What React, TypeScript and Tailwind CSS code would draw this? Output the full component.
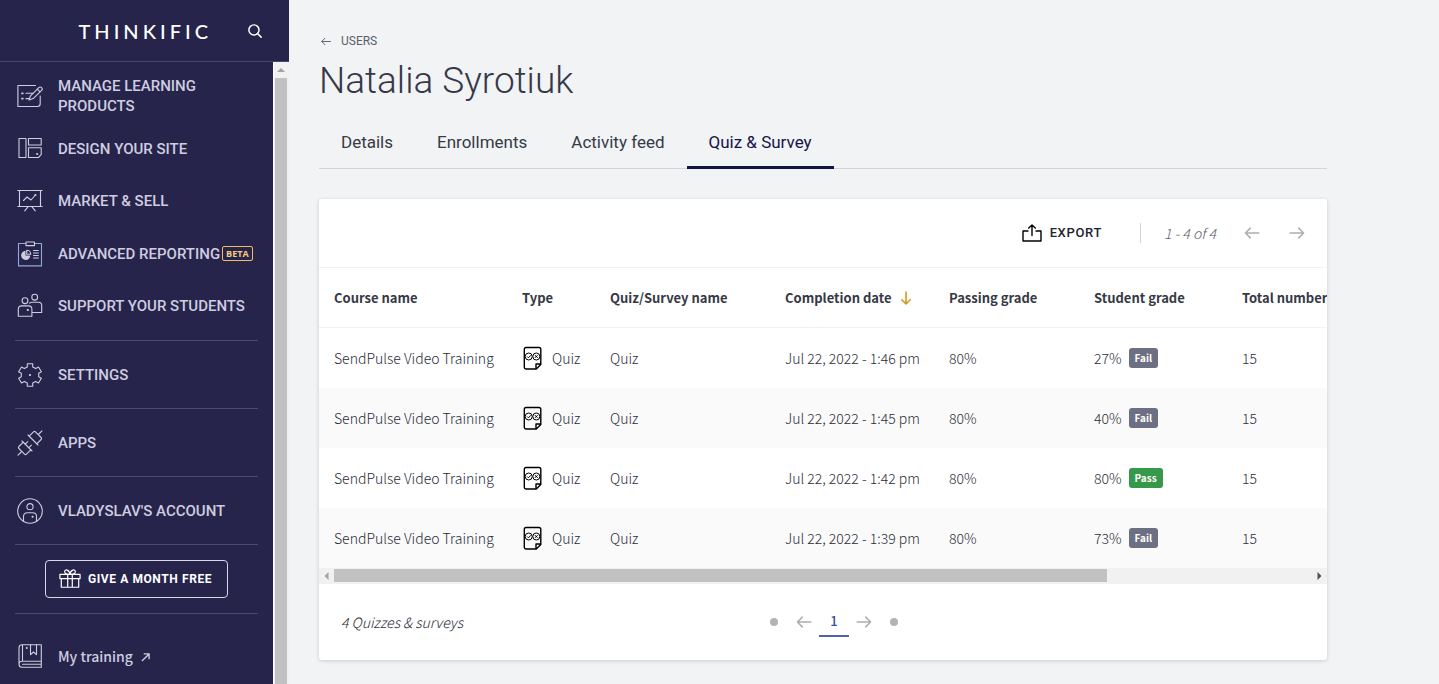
import type { ReactNode } from "react";

const HEAD = "font-[Roboto,'Open_Sans',sans-serif]";
const BODY = "font-['Noto_Sans_CJK_SC','Noto_Sans',sans-serif]";

function Icon({ children }: { children: ReactNode }) {
  return (
    <svg
      viewBox="0 0 26 26"
      className="size-[26px] shrink-0"
      fill="none"
      stroke="currentColor"
      strokeWidth="1.1"
      strokeLinecap="round"
      strokeLinejoin="round"
      aria-hidden="true"
    >
      {children}
    </svg>
  );
}

const icons = {
  manage: (
    <Icon>
      <path d="M18.5 2.5H.9v21h19.6c1.500 0 2.700-1.200 2.700-2.700V13" />
      <path d="M9 10.300h7M9 15.600h3" />
      <path d="M5 10.300h.8M5 15.600h.8" strokeWidth="1.800" />
      <path d="m12 17 1.500-4.200 8.300-8.200a1.900 1.900 0 0 1 2.800 2.800l-8.400 8.200zM20.300 6.200l2.700 2.700" />
    </Icon>
  ),
  design: (
    <Icon>
      <path d="M2 2.500h7v19H2zM11.500 2.500h12.700V9H11.500zM11.500 11.700h12.700v7l-2.800 2.800h-9.900z" />
      <path d="M20 18h.3" strokeWidth="1.800" />
    </Icon>
  ),
  market: (
    <Icon>
      <path d="M.8 2.500h24.400M.8 18.500h24.400M2.500 2.500v16M23.500 2.500v16M11 18.800l-3.300 4M15 18.800l3.300 4" />
      <path d="m6.500 12.500 3.500-3.500 4 3 4-4.500" />
      <path d="M18.300 7h.2" strokeWidth="2" />
    </Icon>
  ),
  report: (
    <Icon>
      <path d="M8.500 2.500h-7v22.400h23V2.500h-7.200" stroke="#8fa9d6" />
      <path d="M9 1h8.500v3.600H9z" />
      <path d="M8.500 9.700v4.800h4.800a4.600 4.600 0 1 1-4.800-4.800z" fill="currentColor" stroke="none" />
      <path d="M9.700 9.200c2.200 0 4 1.700 4 4h-4zM16.500 9.500h4.800M16.500 12h4.800M16.500 14.500h4.800M16.500 17h4.800" />
    </Icon>
  ),
  support: (
    <Icon>
      <circle cx="17.700" cy="4.200" r="2.900" />
      <circle cx="8" cy="7.700" r="2.900" />
      <path d="M1.300 23.200v-7c0-2 1.400-3.300 3.300-3.300h7c1.900 0 3.300 1.300 3.300 3.300v7zM12.500 10.200c.7-.6 1.500-.9 2.500-.9h6.500c1.900 0 3.200 1.300 3.200 3.200v7H15.500" />
      <path d="M10.700 17h.3" strokeWidth="2" />
    </Icon>
  ),
  settings: (
    <Icon>
      <path d="M10.300 1.800h5.400v3.100l3 1.700 2.800-1.600 2.900 4.700-2.700 1.600v3.400l2.700 1.600-2.900 4.700-2.800-1.600-3 1.700v3.100h-5.400v-3.100l-3-1.700-2.800 1.600-2.900-4.700 2.700-1.600v-3.400L1.600 9.700 4.500 5l2.800 1.600 3-1.700z" />
      <path d="M12.900 13h.2" strokeWidth="2" />
    </Icon>
  ),
  apps: (
    <Icon>
      <path d="M1 25.200l3.200-3.200M25 .8l-3.200 3.200" />
      <path d="M6.200 12.200 1.900 16.500c-.6.600-.6 1.400 0 2l5.600 5.600c.6.600 1.400.6 2 0l4.300-4.300M5 11l10 10M8.200 14.200l2.600-2.600M11.800 17.800l2.600-2.600" />
      <path d="m19.800 13.800 4.300-4.300c.6-.6.6-1.400 0-2l-5.600-5.600c-.6-.6-1.400-.6-2 0l-4.300 4.300M11 5l10 10" />
    </Icon>
  ),
  account: (
    <Icon>
      <circle cx="13" cy="13" r="12.300" />
      <circle cx="13" cy="8.700" r="3.100" />
      <path d="M6.500 23v-4.500c0-2.400 1.700-3.800 3.800-3.800h5.400c2.100 0 3.800 1.400 3.800 3.800V23" />
      <path d="M15.500 18.800h.2" strokeWidth="2" />
    </Icon>
  ),
  training: (
    <Icon>
      <path d="M24.300 18.300V1.700H5C3.300 1.700 2 3 2 4.700v16.500c0 1.700 1.300 3 3 3h19.300v-5.900H5c-1.700 0-3 1.300-3 3M5.500 1.700v16.600M5.500 21.300h18.800" />
      <path d="M13.500 1.700v10l3-2.700 3 2.700v-10" />
      <path d="M9.700 5h.2" strokeWidth="1.800" />
    </Icon>
  ),
};

function GiftIcon() {
  return (
    <svg viewBox="0 0 24 24" className="h-[22px] w-[22px]" fill="none" stroke="currentColor" strokeWidth="1.300" strokeLinejoin="round" aria-hidden="true">
      <path d="M1 7h22v4.500H1zM2.500 11.500h19V21h-19zM9.500 7v14M14.500 7v14M12 6.500C9.500 6.800 6.200 6.500 6.200 4c0-3 5-2.500 5.800 2.500C12.800 1.500 17.800 1 17.800 4c0 2.500-3.300 2.800-5.800 2.500z" />
    </svg>
  );
}

function Arrow({ className }: { className: string }) {
  return (
    <svg viewBox="0 0 18 14" className={className} fill="none" stroke="currentColor" strokeWidth="1.700" strokeLinecap="round" strokeLinejoin="round" aria-hidden="true">
      <path d="M17 7H1.500M7 1.300 1.300 7 7 12.700" />
    </svg>
  );
}

function QuizIcon() {
  return (
    <svg viewBox="0 0 20 24" className="h-6 w-5 text-black" fill="none" stroke="currentColor" strokeWidth="1.400" strokeLinejoin="round" aria-hidden="true">
      <path d="M4 1.500h13c1.100 0 1.800.8 1.800 1.800V18.500L14.300 23H4c-1 0-1.700-.7-1.700-1.700v-18c0-1 .7-1.800 1.700-1.800zM14 22.800V18h4.800" />
      <g strokeWidth="1">
        <circle cx="6.700" cy="10.500" r="3.500" />
        <circle cx="14.300" cy="10.500" r="3.500" />
        <path d="m5.100 10.500 1.300 1.300L8.800 9.300M13 9.200l2.600 2.600M15.600 9.200l-2.600 2.600" />
      </g>
    </svg>
  );
}

function NavItem({ icon, children, size }: { icon: ReactNode; children: ReactNode; size: string }) {
  return (
    <a href="#" className={`flex items-center gap-[15px] px-[17px] ${size}`}>
      {icon}
      {children}
    </a>
  );
}

function Divider() {
  return <div className="mx-[15px] border-t border-[#4c4a74]" />;
}

function Sidebar() {
  return (
    <aside className={`sticky top-0 flex h-screen w-[289px] shrink-0 flex-col overflow-hidden bg-[#26244b] text-[15px] leading-5 font-medium text-[#cfcde0] ${HEAD}`}>
      <div className="flex h-[62px] shrink-0 items-center justify-end border-b border-[#454670] pt-px pr-[27px]">
        <a href="#" className="mr-9 font-[Lato,sans-serif] text-[20px] leading-6 font-medium tracking-[4px] text-white">
          THINKIFIC
        </a>
        <button type="button" aria-label="Search" className="text-white">
          <svg viewBox="0 0 16 16" className="size-[14px]" fill="none" stroke="currentColor" strokeWidth="1.700" strokeLinecap="round">
            <circle cx="6.800" cy="6.800" r="5.800" />
            <path d="m11 11 4 4" />
          </svg>
        </button>
      </div>
      <div className="flex min-h-0 flex-1">
        <nav className="flex-1 overflow-hidden pt-[7px]">
          <NavItem icon={icons.manage} size="h-[53px]">
            <span className="w-40">MANAGE LEARNING PRODUCTS</span>
          </NavItem>
          <NavItem icon={icons.design} size="h-[53px]">DESIGN YOUR SITE</NavItem>
          <NavItem icon={icons.market} size="h-[52px]">MARKET &amp; SELL</NavItem>
          <NavItem icon={icons.report} size="h-[53px]">
            <span className="flex items-center gap-[2px] whitespace-nowrap">
              ADVANCED REPORTING
              <span className="rounded-[2px] border border-[#f0bd5e] px-[3px] font-['Open_Sans',sans-serif] text-[9px] leading-[13px] font-bold text-[#f7cc75]">BETA</span>
            </span>
          </NavItem>
          <NavItem icon={icons.support} size="h-[52px]">SUPPORT YOUR STUDENTS</NavItem>
          <div className="h-2" />
          <Divider />
          <NavItem icon={icons.settings} size="h-[67px]">SETTINGS</NavItem>
          <Divider />
          <NavItem icon={icons.apps} size="h-[67px]">APPS</NavItem>
          <Divider />
          <NavItem icon={icons.account} size="h-[67px]">VLADYSLAV'S ACCOUNT</NavItem>
          <Divider />
          <div className="flex h-[68px] items-center justify-center">
            <button type="button" className="flex h-[38px] w-[183px] items-center justify-center gap-[7px] rounded-[4px] border border-[#d9d8e6] pr-[2px] text-[12px] font-bold tracking-wider whitespace-nowrap text-white">
              <GiftIcon />
              GIVE A MONTH FREE
            </button>
          </div>
          <Divider />
          <NavItem icon={icons.training} size="h-[83px]">
            <span className={`flex items-center gap-2 text-[14px] ${BODY}`}>
              My training
              <svg viewBox="0 0 10 10" className="mt-1 size-[9px]" fill="none" stroke="currentColor" strokeWidth="1.500" aria-hidden="true">
                <path d="m1 9 8-8M3 1h6v6" />
              </svg>
            </span>
          </NavItem>
        </nav>
        <div className="flex w-4 flex-col border-l border-white bg-[#f1f1f1] pr-[2px] pl-px">
          <div className="flex h-4 shrink-0 items-center justify-center text-[#a3a3a3]">
            <svg viewBox="0 0 8 4" className="h-1 w-2" fill="currentColor" aria-hidden="true">
              <path d="M4 0l4 4H0z" />
            </svg>
          </div>
          <div className="flex-1 bg-[#c1c1c1]" />
        </div>
      </div>
    </aside>
  );
}

const tabs = ["Details", "Enrollments", "Activity feed", "Quiz & Survey"];

const rows = [
  { time: "1:46", grade: "27%", result: "Fail" },
  { time: "1:45", grade: "40%", result: "Fail" },
  { time: "1:42", grade: "80%", result: "Pass" },
  { time: "1:39", grade: "73%", result: "Fail" },
];

function QuizTable() {
  return (
    <div className="overflow-hidden">
      <table className="w-[1277px] table-fixed text-left text-[14px] leading-5 whitespace-nowrap text-[#2a2d38]">
        <colgroup>
          <col className="w-[188px]" />
          <col className="w-[88px]" />
          <col className="w-[175px]" />
          <col className="w-[164px]" />
          <col className="w-[145px]" />
          <col className="w-[148px]" />
          <col />
        </colgroup>
        <thead>
          <tr className="h-15 border-y border-[#f1f2f4] text-[13px] text-[#363945] [&>th]:pl-[15px] [&>th]:font-bold">
            <th>Course name</th>
            <th>Type</th>
            <th>Quiz/Survey name</th>
            <th>
              <button type="button" className="flex items-center gap-2">
                Completion date
                <svg viewBox="0 0 12 14" className="h-[14px] w-3 text-[#cf9a1f]" fill="none" stroke="currentColor" strokeWidth="1.600" strokeLinecap="round" strokeLinejoin="round" aria-hidden="true">
                  <path d="M6 1v12M1.800 8.800 6 13l4.200-4.200" />
                </svg>
              </button>
            </th>
            <th>Passing grade</th>
            <th>Student grade</th>
            <th>Total number</th>
          </tr>
        </thead>
        <tbody className="font-light">
          {rows.map((row) => (
            <tr key={row.time} className="h-15 even:bg-[#fafafa] [&>td]:pl-[15px]">
              <td>SendPulse Video Training</td>
              <td>
                <span className="flex items-center gap-[10px]">
                  <QuizIcon />
                  Quiz
                </span>
              </td>
              <td>Quiz</td>
              <td>Jul 22, 2022 - {row.time} pm</td>
              <td>80%</td>
              <td>
                <span className="flex items-center gap-[7px]">
                  {row.grade}
                  <span className={`rounded-[3px] px-[6px] text-[10px] leading-5 font-bold text-white ${row.result === "Pass" ? "bg-[#36994a]" : "bg-[#6d7082]"}`}>
                    {row.result}
                  </span>
                </span>
              </td>
              <td>15</td>
            </tr>
          ))}
        </tbody>
      </table>
      <div className="flex h-4 items-center bg-[#f1f1f1] px-[5px]">
        <svg viewBox="0 0 4 8" className="h-2 w-[5px] text-[#a3a3a3]" fill="currentColor" aria-hidden="true">
          <path d="M4 0v8L0 4z" />
        </svg>
        <div className="mx-[5px] flex-1">
          <div className="h-[13px] w-[79%] bg-[#c1c1c1]" />
        </div>
        <svg viewBox="0 0 4 8" className="h-2 w-[5px] text-[#505050]" fill="currentColor" aria-hidden="true">
          <path d="M0 0v8l4-4z" />
        </svg>
      </div>
    </div>
  );
}

export default function App() {
  return (
    <div className="flex min-h-screen bg-[#f1f3f5]">
      <Sidebar />
      <main className="min-w-0 flex-1 pt-[31px] pr-28 pb-6 pl-[30px]">
        <a href="#" className={`flex items-center gap-[10px] text-[12px] leading-5 text-[#5b5e6b] ${HEAD}`}>
          <Arrow className="ml-[2px] h-[9px] w-[10px]" />
          USERS
        </a>
        <h1 className={`text-[37px] leading-[60px] font-light text-[#363848] ${HEAD}`}>Natalia Syrotiuk</h1>
        <div role="tablist" className={`flex h-[58px] border-b border-[#d3d5db] text-[17px] leading-5 text-[#363a45] ${HEAD}`}>
          {tabs.map((tab, i) => (
            <button
              type="button"
              role="tab"
              aria-selected={i === 3}
              key={tab}
              className={`-mb-px border-b-[3px] px-[22px] pt-[7px] ${i === 3 ? "border-[#15124a] text-[#15124a]" : "border-transparent"}`}
            >
              {tab}
            </button>
          ))}
        </div>

        <section className={`mt-[30px] overflow-hidden rounded-[3px] bg-white shadow-[0_1px_4px_rgba(0,0,0,0.16)] ${BODY}`}>
          <div className="flex h-[68px] items-center justify-end pr-[22px]">
            <button type="button" className={`flex items-center gap-2 text-[13px] leading-5 font-medium tracking-wider text-[#22242e] ${HEAD}`}>
              <svg viewBox="0 0 20 18" className="h-[18px] w-5 text-black" fill="none" stroke="currentColor" strokeWidth="1.400" strokeLinecap="round" strokeLinejoin="round" aria-hidden="true">
                <path d="M6 7H1v10h18V7h-5M10 11.500V1M6.700 4 10 1l3.300 3" />
              </svg>
              EXPORT
            </button>
            <span className="ml-[38px] h-5 border-l border-[#d3d5d9]" />
            <span className="ml-[23px] text-[14px] leading-5 font-light text-[#5c5f6a] italic">1 - 4 of 4</span>
            <button type="button" aria-label="Previous" className="ml-7 text-[#adadb0]">
              <Arrow className="h-3 w-4" />
            </button>
            <button type="button" aria-label="Next" className="ml-[29px] text-[#adadb0]">
              <Arrow className="h-3 w-4 rotate-180" />
            </button>
          </div>
          <QuizTable />
          <div className="grid h-[76px] grid-cols-[1fr_150px_1fr] items-center pl-[22px]">
            <span className="text-[14px] leading-5 font-light text-[#2a2d38] italic">4 Quizzes &amp; surveys</span>
            <div className="grid grid-cols-5 items-center justify-items-center text-[#adadb0]">
              <button type="button" aria-label="First page" className="size-2 rounded-full bg-[#b3b3b3]" />
              <button type="button" aria-label="Previous page">
                <Arrow className="h-3 w-4" />
              </button>
              <button type="button" className="h-[30px] w-[30px] border-b-2 border-[#5062b0] text-[13px] leading-5 font-medium text-[#3d50a6]">1</button>
              <button type="button" aria-label="Next page">
                <Arrow className="h-3 w-4 rotate-180" />
              </button>
              <button type="button" aria-label="Last page" className="size-2 rounded-full bg-[#b3b3b3]" />
            </div>
          </div>
        </section>
      </main>
    </div>
  );
}
